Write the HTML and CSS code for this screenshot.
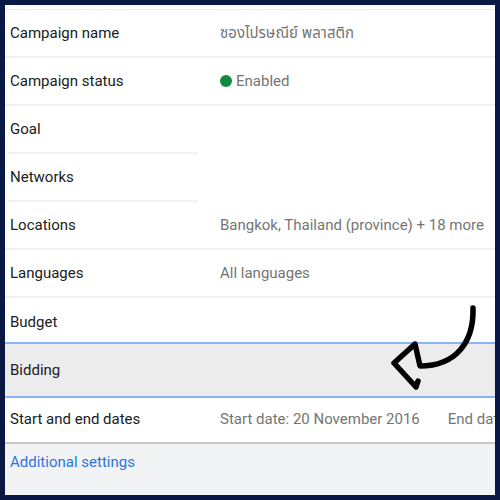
FILE: index.html
```html
<!DOCTYPE html>
<html lang="en">
<head>
<meta charset="UTF-8">
<meta name="viewport" content="width=device-width, initial-scale=1.0">
<title>Campaign settings</title>
<link rel="stylesheet" href="styles.css">
</head>
<body>

<div class="screen">
  <div class="card">
    <div class="top-strip"></div>

    <div class="row">
      <div class="label">Campaign name</div>
      <div class="value thai">ซองไปรษณีย์ พลาสติก</div>
    </div>
    <div class="row">
      <div class="label">Campaign status</div>
      <div class="value"><span class="dot"></span>Enabled</div>
    </div>
    <div class="row row-short">
      <div class="label">Goal</div>
      <div class="value"></div>
    </div>
    <div class="row row-short">
      <div class="label">Networks</div>
      <div class="value"></div>
    </div>
    <div class="row">
      <div class="label">Locations</div>
      <div class="value">Bangkok, Thailand (province) + 18 more</div>
    </div>
    <div class="row">
      <div class="label">Languages</div>
      <div class="value">All languages</div>
    </div>
    <div class="row row-plain row-budget">
      <div class="label">Budget</div>
      <div class="value"></div>
    </div>
    <div class="row row-active">
      <div class="label">Bidding</div>
      <div class="value"></div>
    </div>
    <div class="row row-plain row-dates">
      <div class="label">Start and end dates</div>
      <div class="value dates">
        <span>Start date: 20 November 2016</span>
        <span>End date: None</span>
      </div>
    </div>
  </div>

  <a class="more-link" href="#">Additional settings</a>

  <!-- hand drawn arrow pointing at Bidding -->
  <svg class="arrow" width="500" height="500" viewBox="0 0 500 500">
    <path d="M473 308 C474 342 456 366 420 366 L415 344 L394 363 L416 387 L418 381"
          fill="none" stroke="#000" stroke-width="5.5" stroke-linecap="round" stroke-linejoin="round"/>
  </svg>
</div>

</body>
</html>
```

FILE: styles.css
```css
* {
  box-sizing: border-box;
}
body {
  margin: 0;
  background-color: #0a1845;
  font-family: Roboto, 'Noto Sans', sans-serif;
}
.screen {
  position: relative;
  margin: 5px;
  width: 490px;
  height: 490px;
  background-color: #f1f3f4;
  overflow: hidden;
}
.card {
  background-color: #fff;
  border-bottom: 2px solid #c9c9c9;
}
.top-strip {
  height: 5px;
  border-bottom: 1px solid #ebebeb;
}
.row {
  display: grid;
  grid-template-columns: 210px 1fr;
  align-items: center;
  height: 48px;
  padding-left: 5px;
  border-bottom: 2px solid #f2f2f2;
  font-size: 15px;
}
.row-short {
  border-bottom: none;
}
.row-short .label {
  align-self: stretch;
  display: flex;
  align-items: center;
  border-bottom: 2px solid #f2f2f2;
  margin-left: -3px;
  padding-left: 3px;
  margin-right: 22px;
}
.row-plain {
  height: 44px;
  border-bottom: none;
}
.row-budget {
  padding-top: 3px;
}
.row-dates {
  padding-bottom: 3px;
}
.row-active {
  height: 56px;
  background-color: #ececec;
  border-top: 2px solid #8ab4f8;
  border-bottom: 2px solid #8ab4f8;
}
.label {
  color: #202020;
}
.value {
  color: #757575;
  white-space: nowrap;
  overflow: hidden;
  display: flex;
  align-items: center;
}
.thai {
  font-family: 'Noto Sans Thai', 'Noto Sans', Roboto, sans-serif;
}
.dot {
  display: inline-block;
  width: 12px;
  height: 12px;
  border-radius: 50%;
  background-color: #0f8a3e;
  margin-right: 4px;
}
.dates {
  gap: 28px;
}
.more-link {
  display: block;
  padding: 9px 5px;
  font-size: 15px;
  color: #2f73dc;
  text-decoration: none;
}
.arrow {
  position: absolute;
  left: -5px;
  top: -5px;
}
```
